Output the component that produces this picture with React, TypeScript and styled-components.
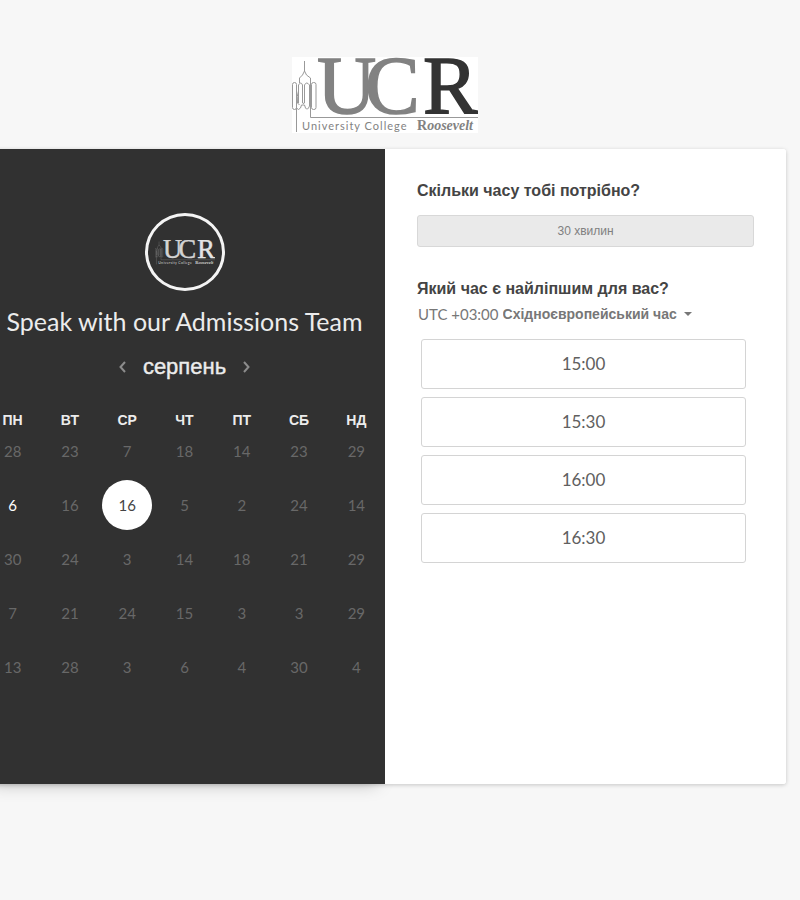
import React, { useState } from "react";
import styled, { createGlobalStyle } from "styled-components";

const GlobalStyle = createGlobalStyle`
  *, *::before, *::after { box-sizing: border-box; }
  body {
    margin: 0;
    background: #f7f7f7;
    color: #444;
    font-family: Lato, "Liberation Sans", sans-serif;
    overflow-x: hidden;
  }
  button, select { font: inherit; color: inherit; }
`;

const sans = `"Liberation Sans", Arial, sans-serif`;

const Page = styled.div`
  margin: 0 14px 0 -16px;
  padding: 57px 0 64px;
`;

const Header = styled.header`
  display: flex;
  justify-content: center;
  margin-bottom: 16px;
`;

const Card = styled.main`
  display: grid;
  grid-template-columns: 1fr 1fr;
  min-height: 635px;
  background: #fff;
  border-radius: 3px;
  box-shadow: 0 1px 4px rgba(0, 0, 0, 0.2);
`;

const CalendarPanel = styled.section`
  display: flex;
  flex-direction: column;
  align-items: center;
  padding-top: 64px;
  background: #313131;
  color: #ececec;
  box-shadow: 0 8px 16px -8px rgba(0, 0, 0, 0.25);
`;

const Avatar = styled.div`
  display: flex;
  align-items: center;
  justify-content: center;
  width: 80px;
  height: 78px;
  border: 3px solid #f4f4f4;
  border-radius: 50%;
`;

const Title = styled.h1`
  margin: 14px 0 0;
  font-size: 25px;
  line-height: 32px;
  font-weight: 400;
  font-variant-ligatures: none;
  white-space: nowrap;
`;

const MonthBar = styled.div`
  display: flex;
  align-items: center;
  gap: 14px;
  margin: 16px 0 35px;
`;

const Month = styled.h2`
  margin: 0;
  font: 400 22px/28px ${sans};
  -webkit-text-stroke: 0.4px currentColor;
`;

const ArrowButton = styled.button`
  display: flex;
  padding: 0;
  border: 0;
  background: none;
  color: #8c8c8c;
  cursor: pointer;
`;

const Calendar = styled.table`
  width: 100%;
  table-layout: fixed;
  border-collapse: collapse;
  text-align: center;
`;

const Weekday = styled.th`
  height: 8px;
  padding: 0;
  font: 700 14px/8px ${sans};
`;

const DayCell = styled.td`
  height: 54px;
  padding: 0;
`;

const Day = styled.button<{ $state: "off" | "open" | "selected" }>`
  width: 50px;
  height: 50px;
  padding: 0;
  border: 0;
  border-radius: 50%;
  font-size: 15px;
  line-height: 20px;
  background: ${(p) => (p.$state === "selected" ? "#fff" : "none")};
  color: ${(p) => ({ off: "#686868", open: "#fff", selected: "#444" })[p.$state]};
`;

const BookingPanel = styled.section`
  padding: 32px;
  background: #fff;
  border-radius: 0 3px 3px 0;
`;

const Question = styled.h3`
  margin: 0;
  font: 700 16px/20px ${sans};
  color: #444;
`;

const DurationButton = styled.button`
  display: block;
  width: 100%;
  height: 32px;
  margin: 14px 0 32px;
  border: 1px solid #d8d8d8;
  border-radius: 3px;
  background: #eaeaea;
  color: #808080;
  font: 400 12px/16px ${sans};
`;

const Timezone = styled.label`
  display: flex;
  align-items: center;
  gap: 4px;
  margin: 5px 0 15px 1px;
  color: #777;
  font-size: 15px;
  line-height: 20px;
  white-space: nowrap;
`;

const TimezoneSelect = styled.select`
  appearance: none;
  padding: 0;
  border: 0;
  background: none;
  font: 700 14px/20px ${sans};
  cursor: pointer;
`;

const Slots = styled.div`
  display: grid;
  gap: 8px;
  padding: 0 8px 0 4px;
`;

const Slot = styled.button`
  height: 50px;
  border: 1px solid #d4d4d4;
  border-radius: 3px;
  background: #fff;
  color: #606060;
  font-size: 17px;
  line-height: 20px;
  cursor: pointer;
`;

type LogoProps = { width: number; height: number; inverse?: boolean };

function Logo({ width, height, inverse }: LogoProps) {
  const soft = inverse ? "#d4d4d4" : "#828282";
  const strong = inverse ? "#e4e4e4" : "#333";
  const line = inverse ? "#8a8a8a" : "#999";
  return (
    <svg width={width} height={height} viewBox="0 0 186 76" role="img" aria-label="University College Roosevelt">
      {!inverse && <rect width="186" height="76" fill="#fff" />}
      <g fill="none" stroke={line} strokeWidth="1">
        <path d="M12.500 4v10M12.500 14l-2 4-3 3v5M12.500 14l2 4 4 3v5" />
        <rect x=".5" y="25.500" width="4" height="27" rx="2" />
        <rect x="19.500" y="25.500" width="4.500" height="27" rx="2" />
        <path d="M4.500 34q2 5 1 12l2 2M6.500 46V28q2.500-4 4 0v18q2 1 2 0V28q2-4 5 0v21q-2 5-4 2l-1-3h-3l-1 3q-2 3-4 0M18.500 26v34.500H186M4.500 50v25" />
      </g>
      <g fontFamily="'Liberation Serif', serif" fontSize="82" strokeWidth="1.500">
        <text x="25" y="56" fill={soft} stroke={soft}>U</text>
        <text x="73" y="56" fill={soft} stroke={soft}>C</text>
        <text x="131" y="56" fill={strong} stroke={strong}>R</text>
      </g>
      <text x="10" y="73" fill={soft} fontFamily="Lato, sans-serif" fontSize="11" letterSpacing="1">University College</text>
      <text x="125" y="73" fill={soft} fontFamily="'Liberation Serif', serif" fontSize="14" fontWeight="700">
        R<tspan fontStyle="italic">oosevelt</tspan>
      </text>
    </svg>
  );
}

const weekdays = ["ПН", "ВТ", "СР", "ЧТ", "ПТ", "СБ", "НД"];
const weeks = [
  [28, 23, 7, 18, 14, 23, 29],
  [6, 16, 16, 5, 2, 24, 14],
  [30, 24, 3, 14, 18, 21, 29],
  [7, 21, 24, 15, 3, 3, 29],
  [13, 28, 3, 6, 4, 30, 4],
];
const slots = ["15:00", "15:30", "16:00", "16:30"];

function dayState(row: number, col: number) {
  if (row === 1 && col === 2) return "selected";
  if (row === 1 && col === 0) return "open";
  return "off";
}

export default function App() {
  const [zone, setZone] = useState("eet");
  return (
    <>
      <GlobalStyle />
      <Page>
        <Header>
          <Logo width={186} height={76} />
        </Header>
        <Card>
          <CalendarPanel>
            <Avatar>
              <Logo width={60} height={25} inverse />
            </Avatar>
            <Title>Speak with our Admissions Team</Title>
            <MonthBar>
              <ArrowButton aria-label="Попередній місяць">
                <svg width="12" height="14" fill="none" stroke="currentColor" strokeWidth="2">
                  <path d="M8 2 3.500 7 8 12" />
                </svg>
              </ArrowButton>
              <Month>серпень</Month>
              <ArrowButton aria-label="Наступний місяць">
                <svg width="12" height="14" fill="none" stroke="currentColor" strokeWidth="2">
                  <path d="m4 2 4.500 5L4 12" />
                </svg>
              </ArrowButton>
            </MonthBar>
            <Calendar>
              <thead>
                <tr>
                  {weekdays.map((name) => (
                    <Weekday key={name} scope="col">{name}</Weekday>
                  ))}
                </tr>
              </thead>
              <tbody>
                {weeks.map((week, row) => (
                  <tr key={row}>
                    {week.map((day, col) => (
                      <DayCell key={col}>
                        <Day $state={dayState(row, col)} disabled={dayState(row, col) === "off"}>
                          {day}
                        </Day>
                      </DayCell>
                    ))}
                  </tr>
                ))}
              </tbody>
            </Calendar>
          </CalendarPanel>
          <BookingPanel>
            <Question>Скільки часу тобі потрібно?</Question>
            <DurationButton>30 хвилин</DurationButton>
            <Question>Який час є найліпшим для вас?</Question>
            <Timezone>
              UTC +03:00
              <TimezoneSelect value={zone} onChange={(e) => setZone(e.target.value)}>
                <option value="eet">Східноєвропейський час</option>
              </TimezoneSelect>
              <svg width="12" height="6" fill="currentColor" aria-hidden="true">
                <path d="M2 1h8L6 5z" />
              </svg>
            </Timezone>
            <Slots>
              {slots.map((time) => (
                <Slot key={time}>{time}</Slot>
              ))}
            </Slots>
          </BookingPanel>
        </Card>
      </Page>
    </>
  );
}
